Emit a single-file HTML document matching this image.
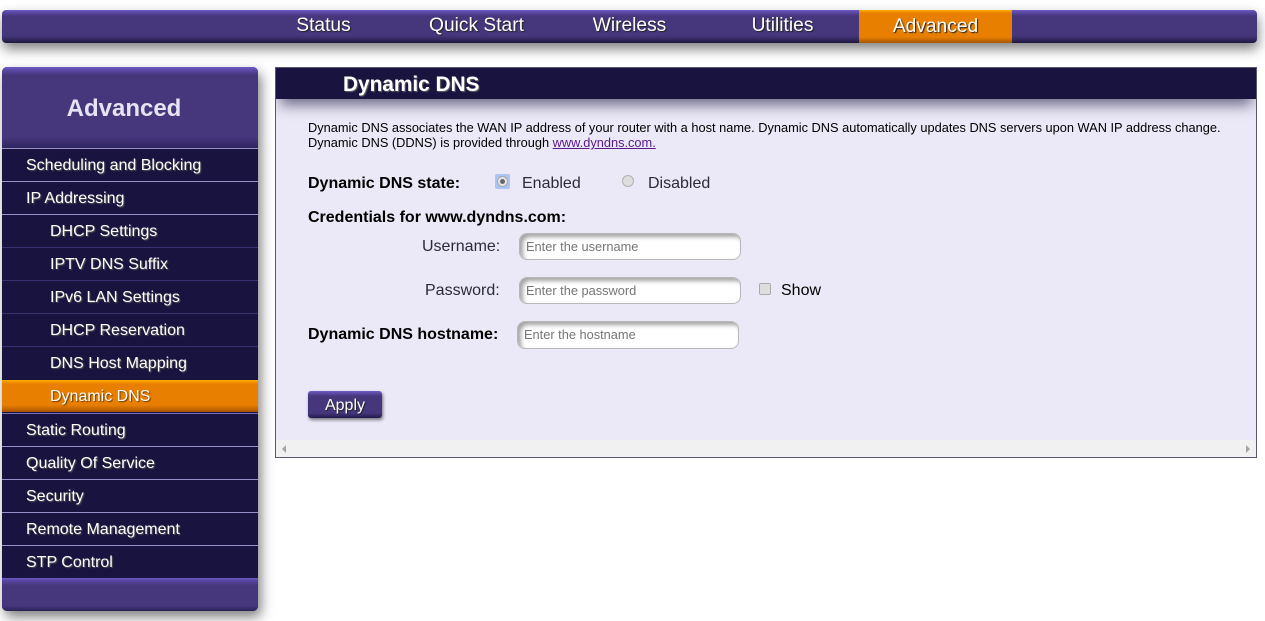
<!DOCTYPE html>
<html><head><meta charset="utf-8"><title>Dynamic DNS</title>
<style>
html,body{margin:0;padding:0;background:#fff;width:1265px;height:621px;overflow:hidden}
body{font-family:"Liberation Sans",Arial,sans-serif;position:relative;color:#000}
.a{position:absolute;white-space:nowrap}
#top{left:2px;top:10px;width:1255px;height:33px;border-radius:4px;background:linear-gradient(#6f5cc4 0,#5c4aa8 2px,#46377d 6px,#46377d 25px,#3b2e6b 28px,#1f1840 33px);box-shadow:1px 6px 12px rgba(0,0,0,.5)}
.t{top:10px;height:33px;width:153px;text-align:center;color:#fff;font-size:19.2px;line-height:32px;text-shadow:1px 1px 1px #222}
#sel{left:859px;top:10px;width:153px;height:33px;background:linear-gradient(#ffae00 0,#e87f00 3px,#e87f00 27px,#a85400 33px);line-height:34px}
#side{left:2px;top:67px;width:256px;height:544px;border-radius:5px;background:#19133f;box-shadow:3px 6px 12px rgba(0,0,0,.5)}
#shead{left:2px;top:67px;width:244px;padding-right:12px;height:81px;border-radius:5px 5px 0 0;background:linear-gradient(#6f5cc4 0,#5c4aa8 3px,#46377d 8px,#46377d 70px,#2f2560 81px);color:#e6e3f3;font-size:24px;font-weight:bold;text-align:center;line-height:84px}
.m{left:2px;width:256px;height:32px;border-top:1px solid #9a90c8;color:#fff;font-size:16px;line-height:33px;text-shadow:1px 1px 1px #555;text-indent:24px}
.s{text-indent:48px;border-top-color:#3b3170}
#on{background:linear-gradient(#ffae00 0,#e87f00 4px,#e87f00 25px,#a85400 32px);border-top:1px solid #19133f;text-shadow:1px 1px 1px #6b3a00;top:379px;line-height:34px}
#sfoot{left:2px;top:578px;width:256px;height:33px;border-radius:0 0 5px 5px;background:linear-gradient(#6f5cc4 0,#5c4aa8 2px,#46377d 7px,#46377d 28px,#2a2155 33px)}
#box{left:275px;top:67px;width:980px;height:389px;border:1px solid #5a5670;background:#ebe9f7;overflow:hidden}
#bar{left:0;top:0;width:980px;height:31px;background:#19133f;color:#fff;font-size:20.8px;font-weight:bold;line-height:33px;text-indent:67px;text-shadow:1px 1px 1px #666;box-shadow:0 10px 14px -4px rgba(40,35,70,.65)}
#sb{left:0;top:372px;width:980px;height:17px;background:#f1f1f1}
.p{font-size:12.8px;left:308px;line-height:15px}
.b{font-size:16px;font-weight:bold;left:308px;line-height:18px}
.l{font-size:16px;color:#2a2a3a;line-height:18px}
.i{width:222px;height:27px;box-sizing:border-box;border:1px solid #b8b8b8;border-radius:8px;background:#fff;box-shadow:inset 3px 3px 4px #a4a4a4;font-size:12.8px;color:#757575;line-height:25px;padding-left:6px}
#apply{left:308px;top:391px;width:74px;height:27px;border-radius:3px;background:linear-gradient(#6f5cc4 0,#46377d 5px,#46377d 22px,#221a4a 27px);color:#fff;font-size:16px;line-height:29px;text-align:center;box-shadow:1px 2px 3px rgba(0,0,0,.5);text-shadow:1px 1px 1px #222}
a{color:#551a8b}
</style></head><body>
<div class="a" id="top"></div>
<div class="a t" style="left:247px">Status</div>
<div class="a t" style="left:400px">Quick Start</div>
<div class="a t" style="left:553px">Wireless</div>
<div class="a t" style="left:706px">Utilities</div>
<div class="a t" id="sel">Advanced</div>

<div class="a" id="side"></div>
<div class="a" id="shead">Advanced</div>
<div class="a m" style="top:148px">Scheduling and Blocking</div>
<div class="a m" style="top:181px">IP Addressing</div>
<div class="a m s" style="top:214px;border-top-color:#9a90c8">DHCP Settings</div>
<div class="a m s" style="top:247px">IPTV DNS Suffix</div>
<div class="a m s" style="top:280px">IPv6 LAN Settings</div>
<div class="a m s" style="top:313px">DHCP Reservation</div>
<div class="a m s" style="top:346px">DNS Host Mapping</div>
<div class="a m s" id="on">Dynamic DNS</div>
<div class="a m" style="top:413px;border-top-color:#7a6cc0;height:32px">Static Routing</div>
<div class="a m" style="top:446px">Quality Of Service</div>
<div class="a m" style="top:479px">Security</div>
<div class="a m" style="top:512px">Remote Management</div>
<div class="a m" style="top:545px">STP Control</div>
<div class="a" id="sfoot"></div>

<div class="a" id="box">
<div class="a" id="bar">Dynamic DNS</div>
<div class="a" id="sb"></div>
</div>
<svg class="a" style="left:281px;top:445px" width="7" height="8"><path d="M5 0V8L1 4Z" fill="#a3a3a3"/></svg>
<svg class="a" style="left:1245px;top:445px" width="7" height="8"><path d="M1 0V8L5 4Z" fill="#a3a3a3"/></svg>

<div class="a p" style="top:120px">Dynamic DNS associates the WAN IP address of your router with a host name. Dynamic DNS automatically updates DNS servers upon WAN IP address change.</div>
<div class="a p" style="top:135px">Dynamic DNS (DDNS) is provided through <a href="#">www.dyndns.com.</a></div>

<div class="a b" style="top:175px">Dynamic DNS state:</div>
<div class="a" style="left:495px;top:174px;width:15px;height:15px;box-sizing:border-box;background:#a9c4f5;border-radius:2px"></div>
<div class="a" style="left:497px;top:176px;width:11px;height:11px;box-sizing:border-box;border-radius:50%;border:1px solid #a8a8a8;background:#e6e6e6"></div>
<div class="a" style="left:500px;top:179px;width:5px;height:5px;border-radius:50%;background:#666"></div>
<div class="a l" style="left:522px;top:175px">Enabled</div>
<div class="a" style="left:622px;top:175px;width:12px;height:12px;box-sizing:border-box;border-radius:50%;border:1px solid #b0b0b0;background:#dedede"></div>
<div class="a l" style="left:648px;top:175px">Disabled</div>

<div class="a b" style="top:209px">Credentials for www.dyndns.com:</div>
<div class="a l" style="left:422px;top:238px">Username:</div>
<div class="a i" style="left:519px;top:233px">Enter the username</div>
<div class="a l" style="left:425px;top:282px">Password:</div>
<div class="a i" style="left:519px;top:277px">Enter the password</div>
<div class="a" style="left:759px;top:283px;width:12px;height:12px;box-sizing:border-box;border:1px solid #aaa;border-radius:2px;background:#dedede"></div>
<div class="a l" style="left:781px;top:282px;color:#000">Show</div>
<div class="a b" style="top:326px">Dynamic DNS hostname:</div>
<div class="a i" style="left:517px;top:321px;height:28px;line-height:26px">Enter the hostname</div>

<div class="a" id="apply">Apply</div>
</body></html>
